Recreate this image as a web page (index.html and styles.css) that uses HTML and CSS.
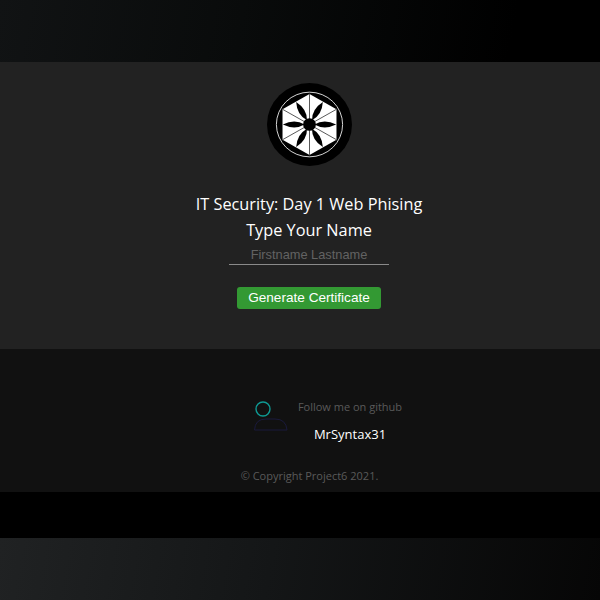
FILE: index.html
```html
<!DOCTYPE html>
<html lang="en">
<head>
<meta charset="utf-8">
<title>IT Security: Day 1 Web Phising</title>
<link rel="stylesheet" href="styles.css">
</head>
<body>
<header class="top-band"></header>
<main class="hero">
  <svg class="logo" width="85" height="83" viewBox="-43 -43 86 86" preserveAspectRatio="none" aria-label="logo">
    <circle r="43" fill="#000"/>
    <circle r="33.5" fill="none" stroke="#d8d8d8" stroke-width="1"/>
    <polygon points="0,-31.5 27.3,-15.75 27.3,15.75 0,31.5 -27.3,15.75 -27.3,-15.75" fill="#fff"/>
    <g stroke="#555" stroke-width="1">
      <line x1="0" y1="-32" x2="0" y2="32"/>
      <line x1="-27.7" y1="-16" x2="27.7" y2="16"/>
      <line x1="-27.7" y1="16" x2="27.7" y2="-16"/>
    </g>
    <g fill="#000">
      <path d="M5 0Q15 -6 27 0Q15 6 5 0Z"/>
      <path d="M5 0Q15 -6 27 0Q15 6 5 0Z" transform="rotate(60)"/>
      <path d="M5 0Q15 -6 27 0Q15 6 5 0Z" transform="rotate(120)"/>
      <path d="M5 0Q15 -6 27 0Q15 6 5 0Z" transform="rotate(180)"/>
      <path d="M5 0Q15 -6 27 0Q15 6 5 0Z" transform="rotate(240)"/>
      <path d="M5 0Q15 -6 27 0Q15 6 5 0Z" transform="rotate(300)"/>
      <circle r="6.5"/>
    </g>
  </svg>
  <h1 class="title title-main">IT Security: Day 1 Web Phising</h1>
  <h2 class="title">Type Your Name</h2>
  <input class="name-input" type="text" placeholder="Firstname Lastname">
  <button class="generate" type="button">Generate Certificate</button>
</main>
<footer class="footer">
  <div class="follow">
    <svg class="avatar" width="36" height="36" viewBox="0 0 36 36" aria-hidden="true">
      <circle cx="10" cy="10" r="7" fill="none" stroke="#0f9a94" stroke-width="1.4"/>
      <path d="M1.5 31H34Q33 20 22 20H13Q2 20 1.5 31Z" fill="none" stroke="#1a1a3c" stroke-width="1"/>
    </svg>
    <div class="follow-text">
      <p class="follow-label">Follow me on github</p>
      <p class="follow-name">MrSyntax31</p>
    </div>
  </div>
  <p class="copyright">© Copyright Project6 2021.</p>
</footer>
<div class="gap"></div>
<div class="bottom-band"></div>
</body>
</html>
```

FILE: styles.css
```css
* { box-sizing: border-box; }
html, body { margin: 0; padding: 0; }
body {
  width: 600px;
  height: 600px;
  overflow: hidden;
  background: #000;
  font-family: "Open Sans", "Noto Sans", sans-serif;
  color: #fff;
}
.top-band {
  height: 62px;
  background: linear-gradient(100deg, #111314 0%, #090b0b 40%, #000 85%);
}
.hero {
  height: 287px;
  background: #222;
  display: flex;
  flex-direction: column;
  align-items: center;
  padding: 21px 0 0 18px;
}
.logo { display: block; flex: none; }
.title {
  margin: 0;
  font-size: 16.3px;
  font-weight: 400;
  line-height: 26px;
}
.title-main { margin-top: 25px; }
.name-input {
  display: block;
  width: 160px;
  height: 22px;
  padding: 2px 0 0;
  border: 0;
  border-bottom: 1px solid #8a8a8a;
  background: transparent;
  color: #fff;
  font-family: "Liberation Sans", Arial, sans-serif;
  font-size: 12.8px;
  text-align: center;
  outline: none;
}
.name-input::placeholder { color: #636363; opacity: 1; }
.generate {
  display: block;
  width: 144px;
  height: 22px;
  margin-top: 22px;
  padding: 0 0 2px;
  border: 0;
  border-radius: 3px;
  background: #339933;
  color: #fff;
  font-family: "Liberation Sans", Arial, sans-serif;
  font-size: 13.6px;
}
.footer {
  height: 143px;
  background: #111;
  display: flex;
  flex-direction: column;
  align-items: center;
  padding: 50px 0 0 19px;
}
.follow {
  display: flex;
  align-items: flex-start;
  gap: 9px;
  margin-left: 36px;
}
.avatar { display: block; flex: none; }
.follow-text {
  display: flex;
  flex-direction: column;
  align-items: center;
}
.follow-label {
  margin: 0;
  font-size: 11px;
  line-height: 15px;
  color: #5a5a5a;
}
.follow-name {
  margin: 11px 0 0;
  font-size: 13px;
  line-height: 18px;
  color: #fff;
}
.copyright {
  margin: 25px 0 0;
  font-size: 11px;
  line-height: 15px;
  color: #5a5a5a;
}
.gap { height: 46px; background: #000; }
.bottom-band {
  height: 62px;
  background: linear-gradient(100deg, #202223 0%, #141617 45%, #060606 100%);
}
```
